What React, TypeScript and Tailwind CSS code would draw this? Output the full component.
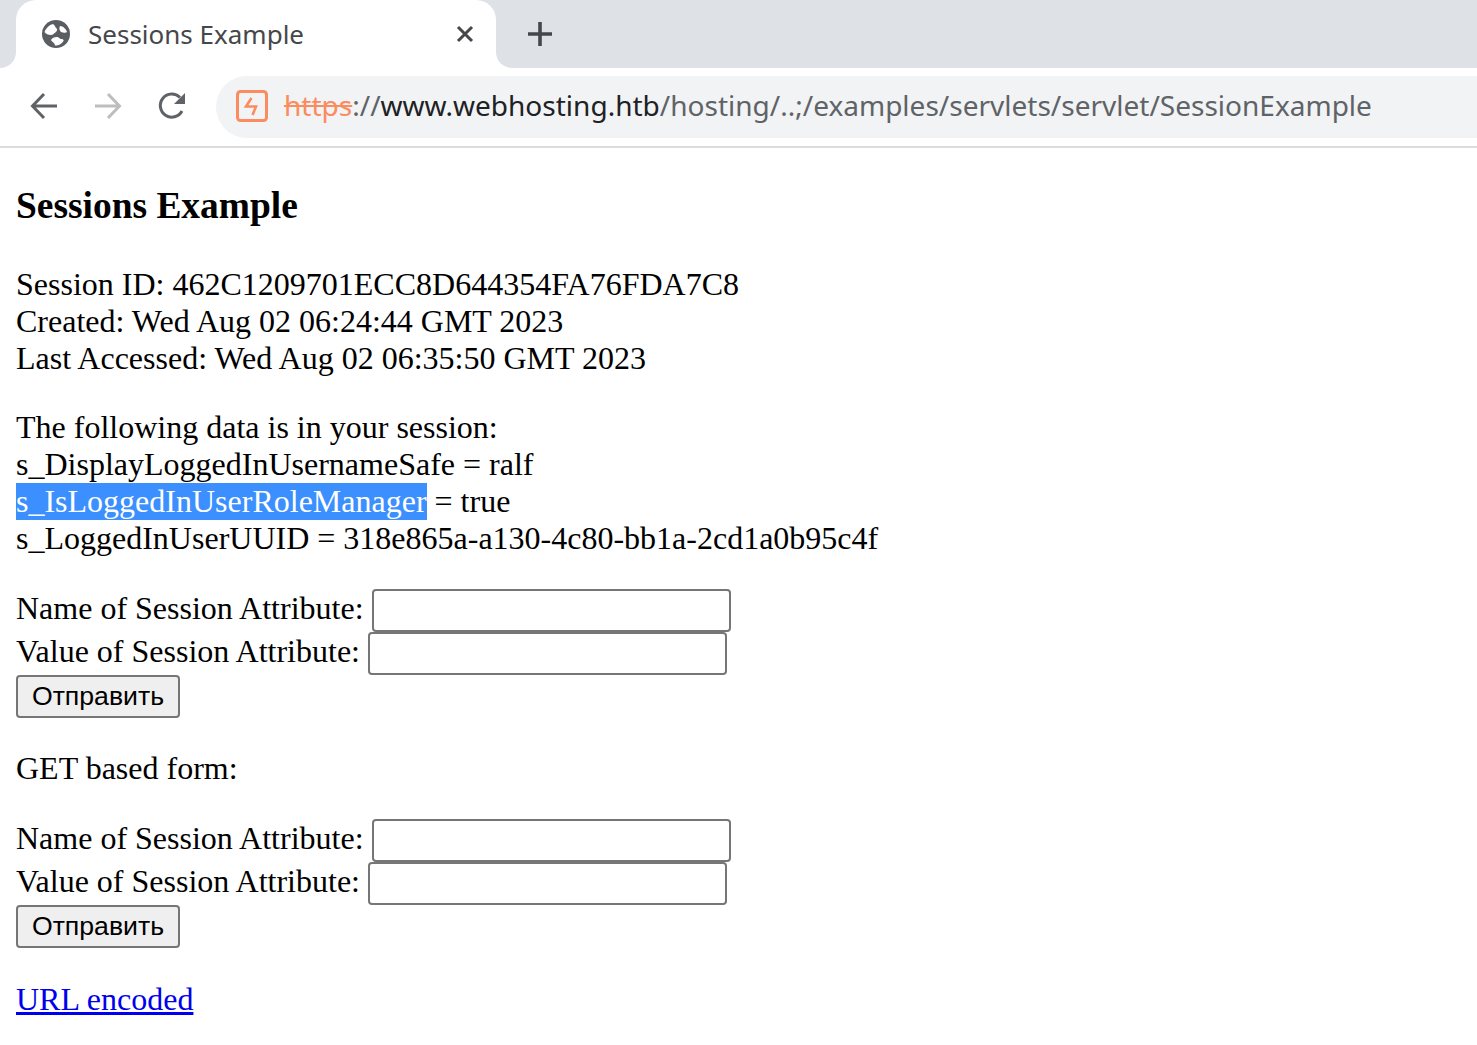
const SERIF = { fontFamily: '"Liberation Serif", serif' }

function SessionForm({ method }: { method: string }) {
  return (
    <form method={method} className="my-8">
      Name of Session Attribute: <input type="text" className="box-border h-[43px] w-[359px] rounded-[4px] border-2 border-[#767676] bg-white font-['Liberation_Sans',sans-serif] text-[26.67px]" />
      <br />
      Value of Session Attribute: <input type="text" className="box-border h-[43px] w-[359px] rounded-[4px] border-2 border-[#767676] bg-white font-['Liberation_Sans',sans-serif] text-[26.67px]" />
      <br />
      <button
        type="button"
        className="box-border h-[43px] w-[164px] rounded-[4px] border-2 border-[#767676] bg-[#efefef] pb-0.5 font-['Liberation_Sans',sans-serif] text-[26.67px] leading-none text-black"
      >
        Отправить
      </button>
    </form>
  )
}

function BrowserChrome() {
  return (
    <div className="border-b-2 border-[#dadce0] font-['Noto_Sans',sans-serif]">
      <div className="flex h-[68px] bg-white">
        <div className="w-4 rounded-br-[16px] bg-[#dee1e6]" />
        <div className="w-[480px] bg-[#dee1e6]">
          <div className="flex h-[68px] items-center rounded-t-[20px] bg-white pl-[26px] pr-[22px]">
            <svg width="28" height="28" viewBox="0 0 28 28" className="shrink-0">
              <circle cx="14" cy="14" r="14" fill="#5a5d62" />
              <path d="M2.5 12 C4 8 7 5 11 4 C13 5 13 7 14 8 C16 9 15 11 14 12 C12 13 11 15 9 15 C6 15 4 14 2.5 12 Z" fill="#fff" />
              <path d="M18 6 C21 6 24 9 25 12 C24 13 21 13 19 12 C17 10 17 8 18 6 Z" fill="#fff" />
              <path d="M13 25.5 C13 23 10 22 9 20 C10 18 12 17 15 17 C17 17 17 19 20 19 C21 19 22 20 21.5 21 C20 24 16 26 13 25.5 Z" fill="#fff" />
            </svg>
            <span className="ml-[18px] flex-1 text-[26px] leading-none text-[#45474b]">Sessions Example</span>
            <svg width="18" height="18" viewBox="0 0 18 18" className="shrink-0">
              <path d="M2 2 L16 16 M16 2 L2 16" stroke="#45474b" strokeWidth="3" />
            </svg>
          </div>
        </div>
        <div className="flex flex-1 items-center rounded-bl-[16px] bg-[#dee1e6] pl-[31px]">
          <svg width="26" height="26" viewBox="0 0 26 26">
            <path d="M13 1 V25 M1 13 H25" stroke="#45474b" strokeWidth="3.6" />
          </svg>
        </div>
      </div>
      <div className="flex h-[78px] items-center bg-white pb-0.5 pl-[30px]">
        <svg width="28" height="28" viewBox="0 0 28 28" fill="none" stroke="#5f6368" strokeWidth="3">
          <path d="M27 14 H3 M14 2 L2.5 14 L14 26" />
        </svg>
        <svg width="28" height="28" viewBox="0 0 28 28" fill="none" stroke="#bdbdbd" strokeWidth="3" className="ml-9">
          <path d="M1 14 H25 M14 2 L25.5 14 L14 26" />
        </svg>
        <svg width="30" height="30" viewBox="0 0 30 30" fill="none" className="ml-[35px]">
          <path d="M25 20 A11.5 11.5 0 1 1 23 6.5" stroke="#5f6368" strokeWidth="3" />
          <path d="M28 2 V13 H17 Z" fill="#5f6368" />
        </svg>
        <div className="ml-[29px] mt-0.5 box-border flex h-[62px] flex-1 items-center rounded-l-[31px] bg-[#f1f3f4] pb-0.5 pl-5">
          <svg width="32" height="32" viewBox="0 0 32 32" fill="none" className="shrink-0">
            <rect x="1.5" y="1.5" width="29" height="29" rx="3" stroke="#fb8c5f" strokeWidth="3" />
            <path d="M15.5 8 L10 16.5 H20 L16.5 25" stroke="#fb8c5f" strokeWidth="2.6" />
          </svg>
          <div className="mb-0.5 ml-4 whitespace-nowrap text-[28.03px] leading-none text-[#5f6368]">
            <span className="text-[#fb8c5f] line-through">https</span>
            ://
            <span className="text-[#202124]">www.webhosting.htb</span>
            /hosting/..;/examples/servlets/servlet/SessionExample
          </div>
        </div>
      </div>
    </div>
  )
}

export default function App() {
  return (
    <div className="min-h-[1045px] overflow-hidden bg-white text-black">
      <BrowserChrome />
      <div style={SERIF} className="m-4 text-[32px] leading-[normal]">
        <h3 className="mb-[38.44px] mt-[36.44px] text-[37.44px] font-bold">Sessions Example</h3>
        Session ID: 462C1209701ECC8D644354FA76FDA7C8
        <br />
        Created: Wed Aug 02 06:24:44 GMT 2023
        <br />
        Last Accessed: Wed Aug 02 06:35:50 GMT 2023
        <br />
        <p className="mb-[31.5px] mt-[32.5px]">
          The following data is in your session:
          <br />
          s_DisplayLoggedInUsernameSafe = ralf
          <br />
          <span className="bg-[#3b8fff] pb-px text-white">s_IsLoggedInUserRoleManager</span> = true
          <br />
          s_LoggedInUserUUID = 318e865a-a130-4c80-bb1a-2cd1a0b95c4f
        </p>
        <SessionForm method="post" />
        <p className="my-8">GET based form:</p>
        <SessionForm method="get" />
        <p className="mt-[32.6px]">
          <a href="#" className="text-[#0000ee] underline">
            URL encoded
          </a>
        </p>
      </div>
    </div>
  )
}
